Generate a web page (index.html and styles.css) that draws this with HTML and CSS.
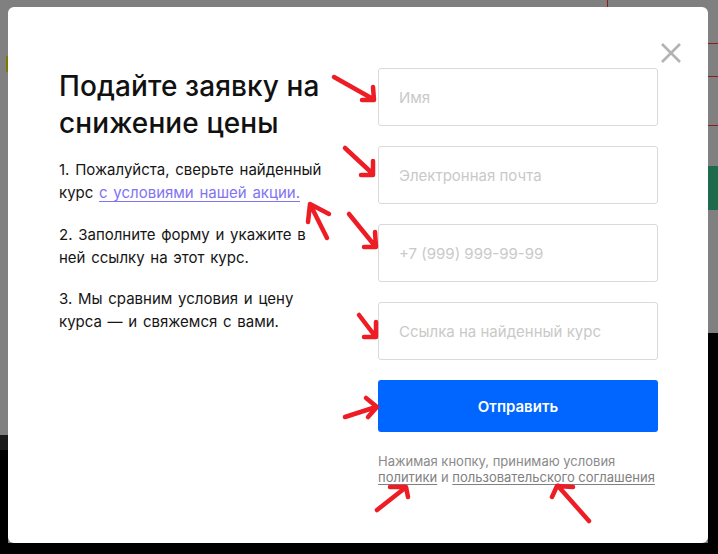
FILE: index.html
```html
<!DOCTYPE html>
<html lang="ru">
<head>
<meta charset="utf-8">
<title>Заявка на снижение цены</title>
<link rel="stylesheet" href="styles.css">
</head>
<body>
<div class="page">
  <div class="bg-left"><div class="bg-yellow"></div><div class="bg-dark"></div></div>
  <div class="bg-right">
    <div class="bg-line l1"></div>
    <div class="bg-line l2"></div>
    <div class="bg-line l3"></div>
    <div class="bg-green"></div>
    <div class="bg-black"></div>
  </div>
  <div class="bg-vline"></div>
</div>
<div class="overlay">
  <div class="modal">
    <button class="close" aria-label="Закрыть">
      <svg width="22" height="22" viewBox="0 0 22 22"><path d="M2 2 L20 20 M20 2 L2 20" stroke="#b3b3b3" stroke-width="2.6" fill="none"/></svg>
    </button>
    <div class="info">
      <h1 class="title">Подайте заявку на снижение цены</h1>
      <p class="step">1. Пожалуйста, сверьте найденный курс <a href="#" class="promo">с условиями нашей акции.</a></p>
      <p class="step">2. Заполните форму и укажите в ней ссылку на этот курс.</p>
      <p class="step">3. Мы сравним условия и цену курса — и свяжемся с вами.</p>
    </div>
    <form class="form">
      <input class="field" type="text" placeholder="Имя">
      <input class="field" type="email" placeholder="Электронная почта">
      <input class="field" type="tel" placeholder="+7 (999) 999-99-99">
      <input class="field" type="url" placeholder="Ссылка на найденный курс">
      <button class="submit" type="button">Отправить</button>
      <p class="note">Нажимая кнопку, принимаю условия <a href="#">политики</a> и <a href="#">пользовательского соглашения</a></p>
    </form>
  </div>
</div>
<svg class="marks" width="718" height="554" viewBox="0 0 718 554">
  <g stroke="#ee1c24" stroke-width="4.5" stroke-linecap="round" stroke-linejoin="round" fill="none">
    <path d="M334 77 L373 99 M373 87 L374 100 L362 100"/>
    <path d="M345 148 L373 174 M373 161 L373 175 L361 175"/>
    <path d="M349 214 L375 246 M375 232 L376 247 L364 247"/>
    <path d="M359 315 L375 336 M376 322 L376 337 L364 337"/>
    <path d="M345 417 L376 407 M366 398 L377 407 L368 417"/>
    <path d="M327 238 L310 204 M308 222 L310 204 L329 214"/>
    <path d="M377 510 L405 488 M390 487 L406 487 L408 497"/>
    <path d="M589 521 L558 486 M552 497 L557 486 L573 487"/>
  </g>
</svg>
</body>
</html>
```

FILE: styles.css
```css
* { box-sizing: border-box; }
html, body { margin: 0; padding: 0; }
body {
  width: 718px;
  height: 554px;
  overflow: hidden;
  background: #7f7f7f;
  font-family: Inter, "Noto Sans", sans-serif;
  position: relative;
}
.page { position: absolute; inset: 0; }
.bg-left { position: absolute; left: 0; top: 0; width: 8px; height: 554px; background: #808080; }
.bg-yellow { position: absolute; left: 6px; top: 56px; width: 2px; height: 16px; background: #857400; }
.bg-dark { position: absolute; left: 0; top: 435px; width: 8px; height: 119px; background: linear-gradient(#1a1a1a 0 15px, #000 15px); }
.bg-right { position: absolute; left: 708px; top: 0; width: 10px; height: 554px; background: #808080; }
.bg-line { position: absolute; left: 0; width: 10px; height: 1px; background: #8f1c1c; }
.l1 { top: 43px; } .l2 { top: 76px; } .l3 { top: 125px; }
.bg-green { position: absolute; left: 0; top: 166px; width: 10px; height: 44px; background: #1f6a4c; }
.bg-black { position: absolute; left: 0; top: 333px; width: 10px; height: 221px; background: #000; }
.bg-vline { position: absolute; left: 607px; top: 0; width: 1px; height: 7px; background: #8f1c1c; }

.overlay {
  position: absolute;
  inset: 0;
  padding: 7px 0 0 8px;
  display: flex;
  align-items: flex-start;
}
.overlay::after {
  content: "";
  position: absolute;
  left: 0; right: 0; top: 543px; bottom: 0;
  background: #000;
  z-index: -1;
}
.modal {
  position: relative;
  width: 700px;
  height: 536px;
  background: #fff;
  border-radius: 6px;
  padding: 61px 51px 0 51px;
  display: grid;
  grid-template-columns: 277px 280px;
  column-gap: 42px;
  align-items: start;
}
.close {
  position: absolute;
  top: 35px;
  right: 26px;
  width: 22px;
  height: 22px;
  padding: 0;
  border: 0;
  background: none;
  cursor: pointer;
}
.close svg { display: block; }
.info { color: #111; }
.title {
  margin: 0 0 16px;
  font-size: 28px;
  line-height: 37px;
  font-weight: 500;
  letter-spacing: 0.1px;
  color: #111;
  width: 300px;
}
.step {
  margin: 0 0 18.5px;
  font-size: 15px;
  line-height: 23px;
  word-spacing: 1.5px;
  color: #151515;
}
.promo { color: #7f74f2; text-decoration: underline; text-underline-offset: 3px; }
.form { display: flex; flex-direction: column; }
.field {
  height: 58px;
  margin-bottom: 20px;
  border: 1px solid #d9d9d9;
  border-radius: 3px;
  padding: 0 20px;
  font-family: inherit;
  font-size: 15px;
  color: #222;
  outline: none;
}
.field::placeholder { color: #c9c9c9; }
.submit {
  height: 52px;
  margin-top: 0;
  border: 0;
  border-radius: 3px;
  background: #0066ff;
  color: #fff;
  font-family: inherit;
  font-size: 15px;
  font-weight: 600;
}
.note {
  margin: 21px 0 0;
  font-size: 13px;
  line-height: 16px;
  color: #8a8a8a;
}
.note a { color: #808080; text-decoration: underline; text-underline-offset: 2px; }
.marks { position: absolute; left: 0; top: 0; pointer-events: none; }
```
